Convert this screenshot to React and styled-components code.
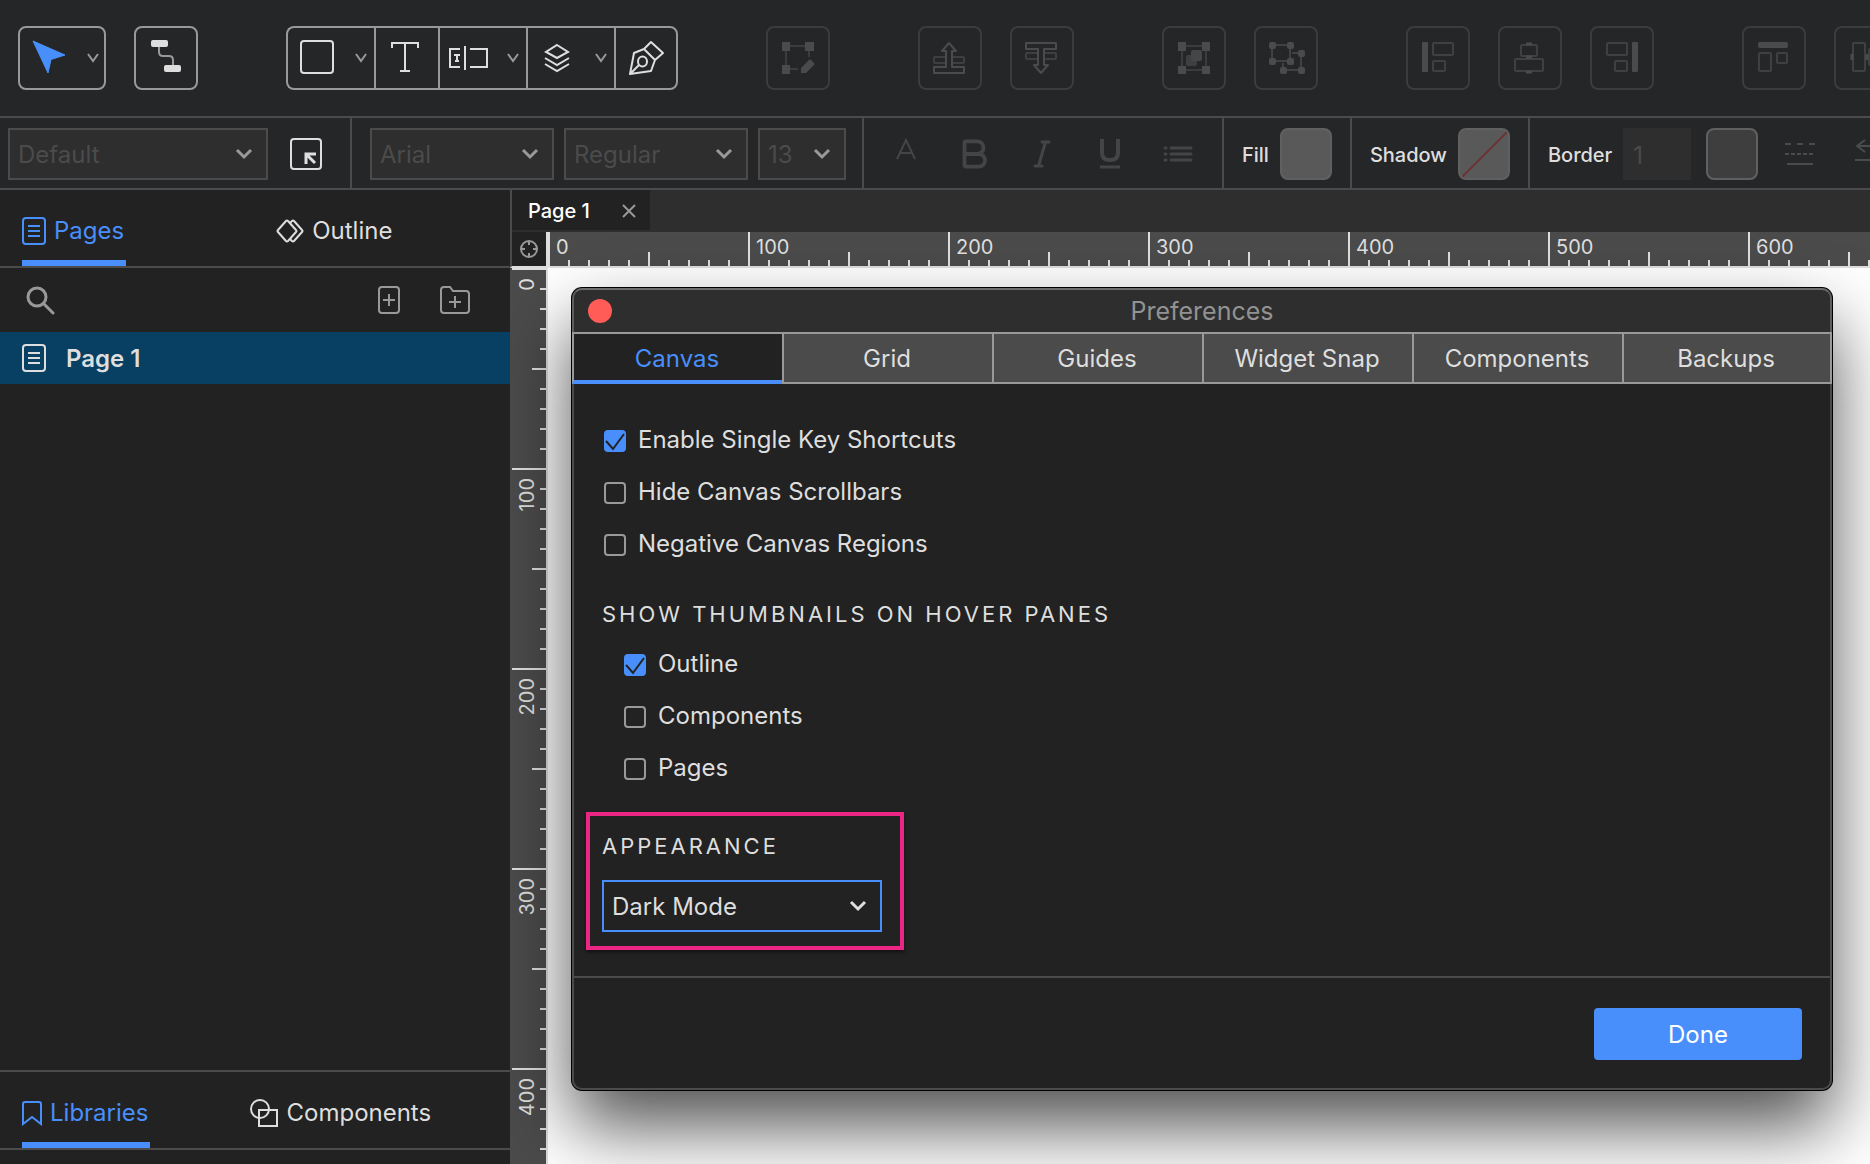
import { useState } from "react";
import styled, { createGlobalStyle, css } from "styled-components";
import { Bold } from "lucide-react";

const GlobalStyles = createGlobalStyle`
  :root {
    --color-toolbar: #252628;
    --color-panel: #222222;
    --color-bar: #2e2e2e;
    --color-line: #4b4b4b;
    --color-muted: #999999;
    --color-text: #dedede;
    --color-disabled: #4b4b4b;
    --color-blue: #488ffb;
    --color-selected: #074062;
    --color-pink: #eb2684;
  }

  *,
  *::before,
  *::after {
    box-sizing: border-box;
    margin: 0;
    padding: 0;
  }

  body {
    background: var(--color-panel);
    color: var(--color-text);
    font-family: Inter, "Liberation Sans", sans-serif;
    font-size: 24px;
    line-height: 32px;
    overflow: hidden;
  }

  button,
  input,
  select {
    font: inherit;
    color: inherit;
    background: none;
    border: none;
    border-radius: 0;
  }

  svg {
    display: block;
    fill: none;
    flex-shrink: 0;
  }
`;

const Page = styled.div`
  height: 100vh;
  display: flex;
  flex-direction: column;
  overflow: hidden;
`;

/* Top toolbar */

const Toolbar = styled.header`
  display: flex;
  flex-shrink: 0;
  gap: 88px;
  padding: 26px 18px;
  background: var(--color-toolbar);
  border-bottom: 2px solid var(--color-line);
`;

const ToolGroup = styled.div`
  display: flex;
  gap: 28px;
`;

const ToolButton = styled.button`
  flex: 0 0 auto;
  height: 64px;
  border: 2px solid var(--color-muted);
  border-radius: 8px;
  color: var(--color-text);

  &:disabled {
    border-color: #3b3c3e;
    color: #4a4b4d;
  }
`;

const JoinedGroup = styled.div`
  display: flex;
  flex-shrink: 0;

  ${ToolButton} {
    padding-right: 2px;
    border-right-width: 0;
    border-radius: 0;
  }

  ${ToolButton}:first-child {
    border-radius: 8px 0 0 8px;
  }

  ${ToolButton}:last-child {
    padding-right: 0;
    border-right-width: 2px;
    border-radius: 0 8px 8px 0;
  }
`;

/* Style bar */

const StyleBar = styled.div`
  display: flex;
  flex-shrink: 0;
  height: 72px;
  background: var(--color-toolbar);
  border-bottom: 2px solid var(--color-line);
`;

const StyleGroup = styled.div`
  display: flex;
  flex-shrink: 0;
  align-items: center;
  gap: ${(props) => props.$gap || 11}px;
  padding: 2px ${(props) => props.$right || 18}px 0
    ${(props) => props.$left || 18}px;
  border-right: 2px solid var(--color-line);

  &:last-child {
    border-right: none;
  }
`;

const StyleLabel = styled.label`
  padding-top: 2px;
  font-size: 20px;
  font-weight: 500;
`;

const SelectBox = styled.div`
  position: relative;
  flex-shrink: 0;
  width: ${(props) => props.$width}px;

  svg {
    position: absolute;
    top: 20px;
    right: 15px;
    pointer-events: none;
    stroke: var(--color-muted);
  }

  ${(props) =>
    props.$active &&
    css`
      svg {
        stroke: var(--color-text);
      }
    `}
`;

const StyledSelect = styled.select`
  appearance: none;
  width: 100%;
  height: 52px;
  padding: 2px 8px 0;
  border: 2px solid var(--color-line);
  background: var(--color-bar);

  &:disabled {
    color: var(--color-disabled);
    opacity: 1;
  }

  ${(props) =>
    props.$active &&
    css`
      border-color: var(--color-blue);
      background: var(--color-panel);
      outline: none;
    `}
`;

const IconButton = styled.button`
  display: flex;
  flex-shrink: 0;
  justify-content: center;
  align-items: center;
  color: ${(props) => props.$color || "var(--color-muted)"};
`;

const FormatButton = styled(IconButton)`
  width: 68px;
  height: 52px;
  color: #444546;
`;

const Swatch = styled.button`
  width: 52px;
  height: 52px;
  flex-shrink: 0;
  border: 2px solid #606060;
  border-radius: 8px;
  background: ${(props) => props.$color};
  overflow: hidden;
`;

const BorderWidth = styled.input`
  width: 68px;
  height: 52px;
  margin-right: 4px;
  padding: 2px 10px 0;
  background: var(--color-bar);
  color: var(--color-disabled);
`;

const LineButtons = styled.div`
  display: flex;
  gap: 40px;
  margin-left: 16px;
`;

/* Sidebar */

const Main = styled.div`
  flex: 1;
  min-height: 0;
  display: grid;
  grid-template-columns: 510px 1fr;
`;

const Sidebar = styled.aside`
  display: flex;
  flex-direction: column;
  background: var(--color-panel);
`;

const PaneTabs = styled.div`
  display: flex;
  gap: ${(props) => props.$gap}px;
  padding: 0 22px;
  border-bottom: 2px solid var(--color-line);
`;

const PaneTab = styled.button`
  display: flex;
  align-items: center;
  gap: 8px;
  height: 76px;
  padding: 12px 2px 0 0;
  border-bottom: 6px solid transparent;

  ${(props) =>
    props.$active &&
    css`
      color: var(--color-blue);
      border-color: var(--color-blue);
    `}
`;

const PageTools = styled.div`
  display: flex;
  align-items: center;
  gap: 40px;
  height: 64px;
  padding: 0 40px 0 26px;

  ${IconButton}:first-child {
    margin-right: auto;
  }
`;

const PageList = styled.ul`
  flex: 1;
  list-style: none;
`;

const PageItem = styled.li`
  display: flex;
  align-items: center;
  gap: 20px;
  height: 52px;
  padding: 0 22px;
  font-weight: 600;
  background: var(--color-selected);

  span {
    padding-top: 2px;
  }
`;

const LibraryPane = styled.div`
  height: 94px;
  border-top: 2px solid var(--color-line);
`;

/* Work area */

const WorkArea = styled.main`
  display: grid;
  grid-template-columns: 38px 1fr;
  grid-template-rows: 42px 36px 1fr;
  min-width: 0;
  overflow: hidden;
`;

const DocTabs = styled.div`
  grid-column: 1 / -1;
  background: var(--color-bar);
  border-left: 2px solid var(--color-line);
`;

const DocTab = styled.div`
  display: flex;
  align-items: center;
  justify-content: space-between;
  width: 138px;
  height: 40px;
  padding: 2px 14px 0 16px;
  background: var(--color-panel);
  color: #ffffff;
  font-size: 20px;
  font-weight: 500;
`;

const Corner = styled.div`
  display: flex;
  align-items: center;
  justify-content: center;
  background: var(--color-panel);
  border: 2px solid var(--color-text);
  border-top: none;
  border-left-color: var(--color-line);
`;

const Ruler = styled.div`
  display: flex;
  overflow: hidden;
  background: var(--color-line);
  font-size: 20px;
  line-height: 24px;
`;

const TopRuler = styled(Ruler)`
  border-bottom: 2px solid var(--color-text);
`;

const SideRuler = styled(Ruler)`
  flex-direction: column;
  padding-left: 2px;
  border-right: 2px solid var(--color-text);
`;

const TopMark = styled.div`
  flex: 0 0 200px;
  padding: 3px 6px;
  border-left: 2px solid var(--color-text);
  background:
    linear-gradient(var(--color-text), var(--color-text)) 98px 100% / 2px 14px
      no-repeat,
    repeating-linear-gradient(
        90deg,
        transparent 0 18px,
        var(--color-text) 18px 20px
      )
      0 100% / 100% 6px no-repeat;
`;

const SideMark = styled.div`
  flex: 0 0 200px;
  padding: 8px 3px;
  border-top: 2px solid var(--color-text);
  background:
    linear-gradient(var(--color-text), var(--color-text)) 100% 98px / 14px 2px
      no-repeat,
    repeating-linear-gradient(transparent 0 18px, var(--color-text) 18px 20px)
      100% 0 / 6px 100% no-repeat;

  span {
    display: block;
    writing-mode: vertical-rl;
    transform: rotate(180deg);
  }
`;

const Canvas = styled.section`
  position: relative;
  z-index: 1;
  padding: 20px 38px 0 24px;
  background: #ffffff;
`;

/* Preferences dialog */

const Dialog = styled.div`
  border-radius: 10px;
  background: var(--color-panel);
  box-shadow:
    0 0 0 1px #000000,
    0 36px 72px rgba(0, 0, 0, 0.69);
`;

const TitleBar = styled.div`
  display: grid;
  grid-template-columns: 24px 1fr 24px;
  align-items: center;
  height: 44px;
  padding: 0 14px;
  border: 2px solid #5e5e5e;
  border-top-color: #6d6d6d;
  border-bottom: none;
  border-radius: 10px 10px 0 0;
  background: var(--color-bar);
  color: #929292;

  h1 {
    font-size: 25px;
    font-weight: 400;
    text-align: center;
  }
`;

const CloseDot = styled.button`
  width: 24px;
  height: 24px;
  border-radius: 50%;
  background: #ff5c57;
`;

const Tabs = styled.div`
  display: grid;
  grid-template-columns: repeat(6, 1fr);
`;

const Tab = styled.button`
  height: 52px;
  padding: 2px 2px 0 0;
  border: 2px solid var(--color-muted);
  border-right-width: 0;
  background: var(--color-line);

  &:last-child {
    border-right-width: 2px;
  }

  ${(props) =>
    props.$active &&
    css`
      padding-top: 4px;
      color: var(--color-blue);
      background: var(--color-panel);
      border-bottom: 4px solid var(--color-blue);
    `}
`;

const DialogBody = styled.div`
  padding: 31px 10px 26px 12px;
  border: solid var(--color-line);
  border-width: 0 2px;
`;

const Options = styled.div`
  padding-left: ${(props) => (props.$nested ? 38 : 18)}px;
`;

const Option = styled.label`
  display: flex;
  align-items: center;
  gap: 12px;
  height: 52px;
`;

const OptionText = styled.span`
  padding-bottom: 2px;
`;

const CheckBox = styled.span`
  display: grid;

  input,
  svg {
    grid-area: 1 / 1;
  }

  input {
    appearance: none;
    width: 22px;
    height: 22px;
    border: 2px solid var(--color-muted);
    border-radius: 4px;
  }

  input:checked {
    border-color: var(--color-blue);
    background: var(--color-blue);
  }

  svg {
    pointer-events: none;
  }
`;

const SectionTitle = styled.h2`
  font-size: 22px;
  font-weight: 400;
  letter-spacing: 3px;
`;

const ThumbnailsTitle = styled(SectionTitle)`
  padding: 27px 16px 9px;
`;

const Appearance = styled.div`
  display: flex;
  flex-direction: column;
  gap: 18px;
  width: 318px;
  margin-top: 17px;
  padding: 14px 12px;
  border: 4px solid var(--color-pink);
  box-shadow: 0 2px 4px rgba(0, 0, 0, 0.5);
`;

const DialogFooter = styled.div`
  display: flex;
  justify-content: flex-end;
  padding: 30px 28px 28px;
  border: 2px solid var(--color-line);
  border-radius: 0 0 10px 10px;
`;

const DoneButton = styled.button`
  width: 208px;
  height: 52px;
  padding-top: 2px;
  border-radius: 4px;
  background: var(--color-blue);
  color: #ffffff;
`;

/* Icons */

function ToolIcon({ width = 64, children }) {
  return (
    <svg
      width={width - 4}
      height="60"
      viewBox={`2 2 ${width - 4} 60`}
      stroke="currentColor"
      strokeWidth="2"
      aria-hidden="true"
    >
      {children}
    </svg>
  );
}

function Caret() {
  return <path d="M70 28l5 7 5-7" stroke="#999999" />;
}

function Chevron() {
  return (
    <svg width="18" height="12" viewBox="0 0 18 12" strokeWidth="3">
      <path d="M2 2l7 7 7-7" />
    </svg>
  );
}

function PageIcon() {
  return (
    <svg
      width="24"
      height="28"
      viewBox="0 0 24 28"
      stroke="currentColor"
      strokeWidth="2"
    >
      <rect x="1" y="1" width="22" height="26" rx="3" />
      <path d="M6 9h12M6 14h12M6 19h12" />
    </svg>
  );
}

function SelectIcon() {
  return (
    <ToolIcon width={88}>
      <path
        d="M15 15L47 29L33 33.5L30 47z"
        fill="#488ffb"
        stroke="#488ffb"
        strokeWidth="1"
        strokeLinejoin="round"
      />
      <Caret />
    </ToolIcon>
  );
}

function ConnectorIcon() {
  return (
    <ToolIcon>
      <path d="M25 21v5q0 4 4 4h6q4 0 4 4v5" stroke="#999999" />
      <g fill="currentColor" stroke="none">
        <rect x="17" y="14" width="17" height="7" rx="2" />
        <rect x="30" y="39" width="17" height="7" rx="2" />
      </g>
    </ToolIcon>
  );
}

function RectangleIcon() {
  return (
    <ToolIcon width={88}>
      <rect x="15" y="15" width="32" height="32" rx="3" />
      <Caret />
    </ToolIcon>
  );
}

function TextIcon() {
  return (
    <ToolIcon>
      <path d="M18 22v-5h26v5M31 17v28M26 45h10" />
    </ToolIcon>
  );
}

function FieldIcon() {
  return (
    <ToolIcon width={88}>
      <path d="M22 23H12v18h10M27 20v24M32 23h17v18H32M16 29h6M19 29v6M17 35h4" />
      <Caret />
    </ToolIcon>
  );
}

function LayersIcon() {
  return (
    <ToolIcon width={88}>
      <path d="M31 19l11 7-11 6-11-6zM19 32l12 7 12-7M19 38l12 7 12-7" />
      <Caret />
    </ToolIcon>
  );
}

function PenIcon() {
  return (
    <ToolIcon>
      <path
        d="M16 48l4-21 10-4 11 11-4 11zM30 23l7-7 12 11-8 7M16 48l9-9"
        strokeLinejoin="round"
      />
      <ellipse cx="28.5" cy="35.5" rx="4.5" ry="5" />
    </ToolIcon>
  );
}

function EditShapeIcon() {
  return (
    <ToolIcon>
      <path d="M24 20h15M20 25v14M43 25v6M24 43h8" stroke="#3b3c3e" />
      <g fill="currentColor" stroke="none">
        <path d="M16 16h8v9h-8zM39 16h9v9h-9zM16 39h8v9h-8z" />
        <path d="M35 47v-5l8-8q1-1 2 0l3 3q1 1 0 2l-8 8z" />
      </g>
    </ToolIcon>
  );
}

function ForwardIcon({ flipped }) {
  return (
    <ToolIcon>
      <g transform={flipped ? "matrix(1 0 0 -1 0 64)" : undefined}>
        <rect x="16" y="31" width="30" height="6" rx="1" stroke="#3e3f41" />
        <path
          d="M31 17l7 8h-4v16h12v6H16v-6h12V25h-4z"
          fill="#252628"
          strokeLinejoin="round"
        />
      </g>
    </ToolIcon>
  );
}

function GroupIcon() {
  return (
    <ToolIcon>
      <rect x="20" y="20" width="24" height="24" stroke="#3b3c3e" />
      <g fill="currentColor" stroke="none">
        <path d="M16 16h8v9h-8zM40 16h8v9h-8zM16 40h8v8h-8zM40 40h8v8h-8z" />
        <rect x="24" y="29" width="11" height="11" rx="2" fill="#3e3f41" />
        <rect x="29" y="24" width="11" height="11" rx="2" fill="#454648" />
      </g>
    </ToolIcon>
  );
}

function UngroupIcon() {
  const points = [
    [18, 19],
    [36, 19],
    [18, 35],
    [36, 35],
    [47, 27],
    [47, 44],
    [29, 44],
  ];

  return (
    <ToolIcon>
      <path d="M18 19h18v16H18zM38 27h9v17H29v-7" stroke="#404143" />
      {points.map(([cx, cy]) => (
        <rect
          key={`${cx}-${cy}`}
          x={cx - 3}
          y={cy - 3}
          width="7"
          height="7"
          rx="2"
          fill="currentColor"
          stroke="none"
        />
      ))}
    </ToolIcon>
  );
}

function AlignSideIcon({ flipped }) {
  return (
    <ToolIcon>
      <g transform={flipped ? "matrix(-1 0 0 1 64 0)" : undefined}>
        <rect
          x="16"
          y="16"
          width="6"
          height="30"
          rx="1"
          fill="currentColor"
          stroke="none"
        />
        <g stroke="#3f4042">
          <rect x="27" y="17" width="20" height="12" rx="1" />
          <rect x="27" y="35" width="12" height="10" rx="1" />
        </g>
      </g>
    </ToolIcon>
  );
}

function AlignCenterIcon() {
  return (
    <ToolIcon>
      <g stroke="#3f4042">
        <rect x="23" y="19" width="16" height="11" rx="1" />
        <rect x="17" y="33" width="28" height="12" rx="1" />
      </g>
      <path d="M28 18h6M28 31h6M28 46h6" strokeWidth="3" />
    </ToolIcon>
  );
}

function AlignTopIcon() {
  return (
    <ToolIcon>
      <rect
        x="16"
        y="16"
        width="30"
        height="6"
        rx="2"
        fill="currentColor"
        stroke="none"
      />
      <g stroke="#3f4042">
        <rect x="17" y="27" width="12" height="18" rx="1" />
        <rect x="35" y="27" width="10" height="10" rx="1" />
      </g>
    </ToolIcon>
  );
}

function AlignMiddleIcon() {
  return (
    <ToolIcon>
      <g stroke="#3f4042">
        <rect x="19" y="17" width="12" height="28" rx="1" />
        <rect x="35" y="23" width="11" height="16" rx="1" />
      </g>
      <path d="M18 28v6M33 28v6M47 28v6" strokeWidth="3" />
    </ToolIcon>
  );
}

/* Parts */

function StyleSelect({ label, value, width }) {
  return (
    <SelectBox $width={width}>
      <StyledSelect aria-label={label} disabled defaultValue={value}>
        <option>{value}</option>
      </StyledSelect>
      <Chevron />
    </SelectBox>
  );
}

function CheckOption({ label, checked = false }) {
  return (
    <Option>
      <CheckBox>
        <input type="checkbox" defaultChecked={checked} />
        {checked && (
          <svg width="22" height="22" stroke="#222222" strokeWidth="2">
            <path d="M2 11l7 8L20 4" />
          </svg>
        )}
      </CheckBox>
      <OptionText>{label}</OptionText>
    </Option>
  );
}

function MainToolbar() {
  return (
    <Toolbar>
      <ToolGroup>
        <ToolButton aria-label="Select">
          <SelectIcon />
        </ToolButton>
        <ToolButton aria-label="Connector">
          <ConnectorIcon />
        </ToolButton>
      </ToolGroup>
      <JoinedGroup>
        <ToolButton aria-label="Rectangle">
          <RectangleIcon />
        </ToolButton>
        <ToolButton aria-label="Text">
          <TextIcon />
        </ToolButton>
        <ToolButton aria-label="Form field">
          <FieldIcon />
        </ToolButton>
        <ToolButton aria-label="Dynamic panel">
          <LayersIcon />
        </ToolButton>
        <ToolButton aria-label="Pen">
          <PenIcon />
        </ToolButton>
      </JoinedGroup>
      <ToolGroup>
        <ToolButton aria-label="Edit points" disabled>
          <EditShapeIcon />
        </ToolButton>
      </ToolGroup>
      <ToolGroup>
        <ToolButton aria-label="Bring to front" disabled>
          <ForwardIcon />
        </ToolButton>
        <ToolButton aria-label="Send to back" disabled>
          <ForwardIcon flipped />
        </ToolButton>
      </ToolGroup>
      <ToolGroup>
        <ToolButton aria-label="Group" disabled>
          <GroupIcon />
        </ToolButton>
        <ToolButton aria-label="Ungroup" disabled>
          <UngroupIcon />
        </ToolButton>
      </ToolGroup>
      <ToolGroup>
        <ToolButton aria-label="Align left" disabled>
          <AlignSideIcon />
        </ToolButton>
        <ToolButton aria-label="Align center" disabled>
          <AlignCenterIcon />
        </ToolButton>
        <ToolButton aria-label="Align right" disabled>
          <AlignSideIcon flipped />
        </ToolButton>
      </ToolGroup>
      <ToolGroup>
        <ToolButton aria-label="Align top" disabled>
          <AlignTopIcon />
        </ToolButton>
        <ToolButton aria-label="Align middle" disabled>
          <AlignMiddleIcon />
        </ToolButton>
      </ToolGroup>
    </Toolbar>
  );
}

function StyleToolbar() {
  return (
    <StyleBar>
      <StyleGroup $left={8} $right={28} $gap={22}>
        <StyleSelect label="Widget style" value="Default" width={260} />
        <IconButton aria-label="Update style" $color="var(--color-text)">
          <svg width="32" height="32" stroke="currentColor" strokeWidth="2">
            <rect x="1" y="1" width="30" height="30" rx="3" />
            <path d="M16 26V16h10M16 16l9 9" strokeWidth="3" />
          </svg>
        </IconButton>
      </StyleGroup>

      <StyleGroup $right={16} $gap={10}>
        <StyleSelect label="Font" value="Arial" width={184} />
        <StyleSelect label="Font weight" value="Regular" width={184} />
        <StyleSelect label="Font size" value="13" width={88} />
      </StyleGroup>

      <StyleGroup $left={8} $right={10} $gap="0">
        <FormatButton aria-label="Text color" disabled>
          <svg width="20" height="34" stroke="currentColor" strokeWidth="2">
            <path d="M1 22L10 3l9 19M4 16h12" />
          </svg>
        </FormatButton>
        <FormatButton aria-label="Bold" disabled>
          <Bold size={38} strokeWidth={2.4} />
        </FormatButton>
        <FormatButton aria-label="Italic" disabled>
          <svg
            width="20"
            height="30"
            stroke="currentColor"
            strokeWidth="3"
            strokeLinecap="round"
          >
            <path d="M10 3h7M3 27h7M13.5 3l-7 24" />
          </svg>
        </FormatButton>
        <FormatButton aria-label="Underline" disabled>
          <svg width="22" height="32" stroke="currentColor" strokeWidth="4">
            <path d="M3 1v14q0 7 8 7t8-7V1" />
            <path d="M1 29h20" strokeWidth="3" />
          </svg>
        </FormatButton>
        <FormatButton aria-label="Bullets" disabled>
          <svg
            width="30"
            height="18"
            stroke="currentColor"
            strokeWidth="3"
            strokeLinecap="round"
          >
            <path d="M2 3h1M2 9h1M2 15h1M8 3h20M8 9h20M8 15h20" />
          </svg>
        </FormatButton>
      </StyleGroup>

      <StyleGroup>
        <StyleLabel htmlFor="fill">Fill</StyleLabel>
        <Swatch id="fill" $color="#595959" />
      </StyleGroup>

      <StyleGroup>
        <StyleLabel htmlFor="shadow">Shadow</StyleLabel>
        <Swatch id="shadow" $color="#595959">
          <svg width="48" height="48" stroke="#6b3434" strokeWidth="2">
            <path d="M2 47L47 2" />
          </svg>
        </Swatch>
      </StyleGroup>

      <StyleGroup>
        <StyleLabel htmlFor="border-width">Border</StyleLabel>
        <BorderWidth id="border-width" defaultValue="1" disabled />
        <Swatch aria-label="Border color" $color="#3e3e3e" />
        <LineButtons>
          <IconButton aria-label="Line style" $color="#4a4b4d" disabled>
            <svg width="30" height="24" stroke="currentColor" strokeWidth="2">
              <path d="M0 2h30" strokeDasharray="6 6" />
              <path d="M0 12h30" strokeDasharray="4 2" />
              <path d="M2 22h26" />
            </svg>
          </IconButton>
          <IconButton aria-label="Arrow style" $color="#4a4b4d" disabled>
            <svg width="30" height="32" stroke="currentColor" strokeWidth="2">
              <path d="M10 2L2 8l8 6M2 8h26M0 22h30" />
            </svg>
          </IconButton>
        </LineButtons>
      </StyleGroup>
    </StyleBar>
  );
}

function LeftSidebar() {
  return (
    <Sidebar>
      <PaneTabs $gap={150}>
        <PaneTab $active>
          <PageIcon />
          Pages
        </PaneTab>
        <PaneTab>
          <svg
            width="28"
            height="24"
            stroke="currentColor"
            strokeWidth="2"
            strokeLinejoin="round"
          >
            <path d="M10 2q1-1 2 0l8 9q1 1 0 2l-8 9q-1 1-2 0l-8-9q-1-1 0-2z" />
            <path d="M14 4l2-2q1-1 2 0l8 9q1 1 0 2l-8 9q-1 1-2 0l-2-2" />
          </svg>
          Outline
        </PaneTab>
      </PaneTabs>

      <PageTools>
        <IconButton aria-label="Search">
          <svg
            width="30"
            height="30"
            stroke="currentColor"
            strokeWidth="3"
            strokeLinecap="round"
          >
            <circle cx="11" cy="12" r="9" />
            <path d="M18 19l9 9" />
          </svg>
        </IconButton>
        <IconButton aria-label="Add page">
          <svg width="22" height="28" stroke="currentColor" strokeWidth="2">
            <rect x="1" y="1" width="20" height="26" rx="3" />
            <path d="M11 8v12M5 14h12" />
          </svg>
        </IconButton>
        <IconButton aria-label="Add folder">
          <svg width="30" height="28" stroke="currentColor" strokeWidth="2">
            <path d="M1 24V4q0-3 3-3h6l3 4h13q3 0 3 3v16q0 3-3 3H4q-3 0-3-3z" />
            <path d="M15 10v12M9 16h12" />
          </svg>
        </IconButton>
      </PageTools>

      <PageList>
        <PageItem>
          <PageIcon />
          <span>Page 1</span>
        </PageItem>
      </PageList>

      <LibraryPane>
        <PaneTabs $gap={100}>
          <PaneTab $active>
            <svg width="20" height="26" stroke="currentColor" strokeWidth="2">
              <path d="M1 24V4q0-2 2-2h14q2 0 2 2v20l-9-7z" />
            </svg>
            Libraries
          </PaneTab>
          <PaneTab>
            <svg width="28" height="28" stroke="currentColor" strokeWidth="2">
              <circle cx="10" cy="10" r="9" />
              <path d="M9 11h18v16H9z" />
            </svg>
            Components
          </PaneTab>
        </PaneTabs>
      </LibraryPane>
    </Sidebar>
  );
}

const prefTabs = [
  "Canvas",
  "Grid",
  "Guides",
  "Widget Snap",
  "Components",
  "Backups",
];

function Preferences() {
  const [tab, setTab] = useState("Canvas");

  return (
    <Dialog role="dialog" aria-labelledby="preferences-title">
      <TitleBar>
        <CloseDot aria-label="Close" />
        <h1 id="preferences-title">Preferences</h1>
      </TitleBar>
      <Tabs role="tablist">
        {prefTabs.map((name) => (
          <Tab
            key={name}
            role="tab"
            aria-selected={name === tab}
            $active={name === tab}
            onClick={() => setTab(name)}
          >
            {name}
          </Tab>
        ))}
      </Tabs>
      <DialogBody>
        <Options>
          <CheckOption label="Enable Single Key Shortcuts" checked />
          <CheckOption label="Hide Canvas Scrollbars" />
          <CheckOption label="Negative Canvas Regions" />
        </Options>
        <ThumbnailsTitle>SHOW THUMBNAILS ON HOVER PANES</ThumbnailsTitle>
        <Options $nested>
          <CheckOption label="Outline" checked />
          <CheckOption label="Components" />
          <CheckOption label="Pages" />
        </Options>
        <Appearance>
          <SectionTitle as="label" htmlFor="appearance">
            APPEARANCE
          </SectionTitle>
          <SelectBox $width={280} $active>
            <StyledSelect id="appearance" $active defaultValue="Dark Mode">
              <option>Dark Mode</option>
              <option>Light Mode</option>
            </StyledSelect>
            <Chevron />
          </SelectBox>
        </Appearance>
      </DialogBody>
      <DialogFooter>
        <DoneButton>Done</DoneButton>
      </DialogFooter>
    </Dialog>
  );
}

const topMarks = [0, 100, 200, 300, 400, 500, 600];
const sideMarks = [0, 100, 200, 300, 400];

function App() {
  return (
    <>
      <GlobalStyles />
      <Page>
        <MainToolbar />
        <StyleToolbar />
        <Main>
          <LeftSidebar />
          <WorkArea>
            <DocTabs>
              <DocTab>
                Page 1
                <IconButton aria-label="Close page">
                  <svg
                    width="14"
                    height="14"
                    stroke="currentColor"
                    strokeWidth="2"
                  >
                    <path d="M1 1l12 12M13 1L1 13" />
                  </svg>
                </IconButton>
              </DocTab>
            </DocTabs>
            <Corner>
              <svg width="18" height="18" stroke="#999999" strokeWidth="2">
                <circle cx="9" cy="9" r="8" />
                <path d="M9 1v4M9 13v4M1 9h4M13 9h4" />
              </svg>
            </Corner>
            <TopRuler>
              {topMarks.map((mark) => (
                <TopMark key={mark}>{mark}</TopMark>
              ))}
            </TopRuler>
            <SideRuler>
              {sideMarks.map((mark) => (
                <SideMark key={mark}>
                  <span>{mark}</span>
                </SideMark>
              ))}
            </SideRuler>
            <Canvas>
              <Preferences />
            </Canvas>
          </WorkArea>
        </Main>
      </Page>
    </>
  );
}

export default App;
